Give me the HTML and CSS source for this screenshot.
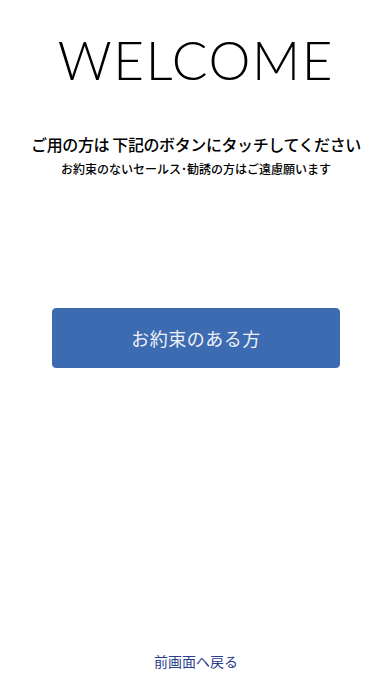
FILE: index.html
```html
<!DOCTYPE html>
<html lang="ja">
<head>
<meta charset="utf-8">
<link rel="stylesheet" href="styles.css">
</head>
<body>
<main class="page">
  <h1 class="title">WELCOME</h1>
  <p class="lead">ご用の方は 下記のボタンにタッチしてください</p>
  <p class="note">お約束のないセールス･勧誘の方はご遠慮願います</p>
  <div class="actions">
    <button class="btn">お約束のある方</button>
  </div>
  <a class="back" href="#">前画面へ戻る</a>
</main>
</body>
</html>
```
FILE: styles.css
```css
html, body {
  margin: 0;
  padding: 0;
  background: #ffffff;
}
.page {
  width: 392px;
  height: 696px;
  display: flex;
  flex-direction: column;
  align-items: center;
  font-family: "Noto Sans CJK JP", "Noto Sans", sans-serif;
}
.title {
  margin: 28px 0 0;
  font-family: "Lato", "Inter", sans-serif;
  font-weight: 300;
  font-size: 53px;
  line-height: 64px;
  letter-spacing: 1.6px;
  color: #000;
}
.lead {
  margin: 41px 0 0;
  font-size: 16px;
  font-weight: 500;
  line-height: 22px;
  color: #000;
  letter-spacing: -0.4px;
}
.note {
  margin: 5px 0 0;
  font-size: 12px;
  font-weight: 500;
  line-height: 18px;
  color: #000;
  letter-spacing: 0px;
}
.actions {
  margin-top: 130px;
}
.btn {
  width: 288px;
  height: 60px;
  border: 1px solid #3a68ad;
  border-radius: 4px;
  background: #3d6bb2;
  color: #eef2f8;
  font-family: "Noto Sans CJK JP", sans-serif;
  font-size: 18px;
  font-weight: 400;
  letter-spacing: 0.5px;
}
.back {
  margin-top: auto;
  margin-bottom: 25px;
  font-size: 14px;
  color: #2b3f8e;
  text-decoration: none;
  line-height: 20px;
}
```
